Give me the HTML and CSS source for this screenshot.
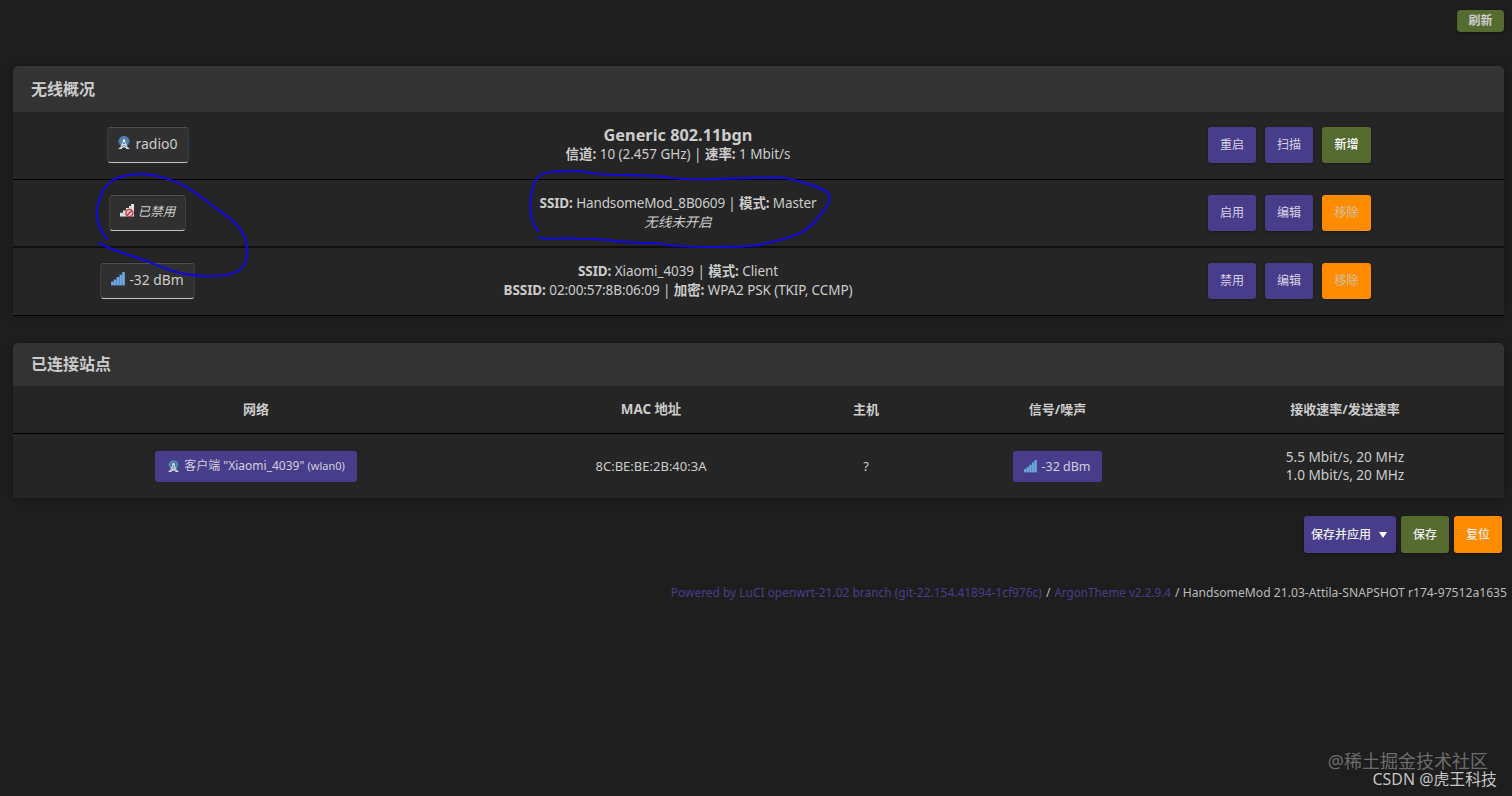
FILE: index.html
```html
<!DOCTYPE html>
<html lang="zh-CN">
<head>
<meta charset="utf-8">
<title>HandsomeMod - 无线</title>
<link rel="stylesheet" href="styles.css">
</head>
<body>
<svg class="defs" width="0" height="0" aria-hidden="true">
  <symbol id="antenna" viewBox="0 0 14 14">
    <circle cx="7" cy="5.5" r="5.8" fill="#37608c"/>
    <circle cx="7" cy="5.2" r="4.2" fill="#4879a8" stroke="#6b9aca" stroke-width=".9"/>
    <path d="M6.8 4.5 3.4 12.4M7.2 4.5l3.4 7.9M5.3 8.4h3.4M4.6 9.6l5 2.2M9.4 9.6l-5 2.2" fill="none" stroke="#dedfdd" stroke-width="1.05"/>
    <path d="M1.7 12.3h3.2M9.1 12.3h3.2" stroke="#dedfdd" stroke-width="1.2"/>
    <circle cx="7" cy="4.4" r="1.2" fill="#f4f4f4"/>
  </symbol>
  <symbol id="bars" viewBox="0 0 14 14">
    <path d="M0 13.5V9.5h2.5V7.5h3V5h3V2.5h2.5V0H14v13.5z" fill="#5288c4"/>
    <path d="M1.3 13V10M4 13V8M6.9 13V5.5M9.7 13V3M12.5 13V.6" stroke="#78aadf" stroke-width="1.7"/>
  </symbol>
  <symbol id="bars-off" viewBox="0 0 14 14">
    <path d="M0 12.5V8.8h3V6.5h3V4h3V2h2V0h3v12.5z" fill="#e4e2dc"/>
    <path d="M3 9v3M6 6.7V12M9 4v8M11.2 2v8" stroke="#aaa8a4" stroke-width=".5"/>
    <circle cx="9.4" cy="9" r="3.6" fill="#e8c4c6" stroke="#bd3c4a" stroke-width="1.4"/>
    <path d="m7 11.4 4.8-4.8" stroke="#bd3c4a" stroke-width="1.4"/>
  </symbol>
</svg>

<div class="toolbar"><button class="btn-refresh">刷新</button></div>

<section class="panel overview">
  <h3 class="title">无线概况</h3>
  <div class="device">
    <div class="cell"><span class="badge radio"><svg class="ico"><use href="#antenna"/></svg><span>radio0</span></span></div>
    <div class="cell"><strong class="name">Generic 802.11bgn</strong><span class="line l-radio"><b>信道:</b> 10 (2.457 GHz) | <b>速率:</b> 1 Mbit/s</span></div>
    <div class="cell actions"><button class="btn">重启</button><button class="btn">扫描</button><button class="btn add">新增</button></div>
  </div>
  <div class="device">
    <div class="cell"><span class="badge disabled"><svg class="ico"><use href="#bars-off"/></svg><em>已禁用</em></span></div>
    <div class="cell"><span class="line l-ap"><b>SSID:</b> HandsomeMod_8B0609 | <b>模式:</b> Master</span><em class="line note">无线未开启</em></div>
    <div class="cell actions"><button class="btn">启用</button><button class="btn">编辑</button><button class="btn remove">移除</button></div>
  </div>
  <div class="device">
    <div class="cell"><span class="badge signal"><svg class="ico"><use href="#bars"/></svg><span>-32 dBm</span></span></div>
    <div class="cell"><span class="line l-sta"><b>SSID:</b> Xiaomi_4039 | <b>模式:</b> Client</span><span class="line l-bssid"><b>BSSID:</b> 02:00:57:8B:06:09 | <b>加密:</b> WPA2 PSK (TKIP, CCMP)</span></div>
    <div class="cell actions"><button class="btn">禁用</button><button class="btn">编辑</button><button class="btn remove">移除</button></div>
  </div>
</section>

<section class="panel stations">
  <h3 class="title">已连接站点</h3>
  <div class="station head"><span>网络</span><span>MAC 地址</span><span>主机</span><span>信号/噪声</span><span>接收速率/发送速率</span></div>
  <div class="station">
    <div><span class="tag net"><svg class="ico"><use href="#antenna"/></svg><span>客户端 "Xiaomi_4039" <small>(wlan0)</small></span></span></div>
    <div><span class="mac">8C:BE:BE:2B:40:3A</span></div>
    <div>?</div>
    <div><span class="tag level"><svg class="ico"><use href="#bars"/></svg><span>-32 dBm</span></span></div>
    <div class="rates">5.5 Mbit/s, 20 MHz<br>1.0 Mbit/s, 20 MHz</div>
  </div>
</section>

<div class="page-actions"><button class="btn apply">保存并应用<i class="caret"></i></button><button class="btn save">保存</button><button class="btn reset">复位</button></div>

<footer class="footer"><a class="luci">Powered by LuCI openwrt-21.02 branch (git-22.154.41894-1cf976c)</a><span>/</span><a class="argon">ArgonTheme v2.2.9.4</a><span class="version">/ HandsomeMod 21.03-Attila-SNAPSHOT r174-97512a1635</span></footer>

<svg class="ink" viewBox="0 0 1512 796" aria-hidden="true">
  <path d="M107 239C99 229 96 220 97 211C99 195 105 184 115 179C130 173 148 173 165 178C186 184 200 196 217 209C232 219 242 229 245 238C248 248 247 259 244 265C239 273 229 276 212 276C190 277 173 272 154 264C135 256 115 252 99 243"/>
  <path d="M538 231C530 221 529 205 532 190C535 180 538 173 551 172C567 171 581 170 598 174C624 176 650 174 672 178C704 182 758 176 785 178C800 181 824 188 829 194C832 202 823 211 817 219C808 232 794 236 780 240C762 245 749 247 716 247C690 247 670 246 656 243C626 244 606 238 584 239C566 237 550 240 538 238"/>
</svg>
<div class="mark community">@稀土掘金技术社区</div>
<div class="mark author">CSDN @虎王科技</div>
</body>
</html>
```
FILE: styles.css
```css
* { box-sizing: border-box; }
body { margin: 0; height: 796px; overflow: hidden; background: #1e1e1e; color: #ccc; font: 14px/20px "Noto Sans", "Noto Sans CJK SC", sans-serif; }
button { font: inherit; border: 0; padding: 0; color: inherit; }
.defs { display: block; }
.toolbar { display: flex; justify-content: flex-end; height: 66px; padding: 10px 8px 0 0; }
.btn-refresh { width: 47px; height: 22px; border-radius: 4px; background: #556b2f; font-size: 12px; font-weight: 700; line-height: 20px; box-shadow: 0 1px 3px rgba(0,0,0,.4); }
.panel { width: 1491px; margin-left: 13px; border-radius: 5px 5px 0 0; background: #252525; box-shadow: 0 0 10px rgba(0,0,0,.3); overflow: hidden; }
.title { margin: 0; padding-left: 18px; height: 46px; line-height: 46px; font-size: 16px; background: #333; }
.device { display: grid; grid-template-columns: 269px 792px 1fr; height: 68px; padding-bottom: 1px; border-bottom: 1px solid #000; }
.device:nth-child(3) { padding-bottom: 0; border-bottom: 2px solid #101010; }
.cell { display: flex; flex-direction: column; align-items: center; justify-content: center; white-space: nowrap; }
.actions { flex-direction: row; gap: 9px; padding-left: 1px; }
.line { line-height: 19px; font-size: 13.5px; }
.l-radio { letter-spacing: -.03px; }
.l-ap { letter-spacing: -.13px; }
.l-sta { letter-spacing: -.08px; }
.l-bssid { letter-spacing: -.09px; }
.name { font-size: 16.3px; line-height: 19px; }
.badge { display: flex; justify-content: center; gap: 4px; height: 36px; padding-top: 6px; border: 1px solid #3c3c3c; border-top-color: #505050; border-bottom: 1px solid #c4c4c4; border-radius: 4px; background: #303030; }
.radio { width: 82px; }
.disabled { width: 77px; font-size: 12.5px; }
.signal { width: 95px; gap: 4px; }
.signal span { font-size: 13.8px; }
.ico { width: 14px; height: 14px; flex: none; margin-top: 2px; }
.btn { width: 48px; height: 36px; border-radius: 3px; background: #483d8b; font-size: 12px; line-height: 36px; color: #d8d4e4; box-shadow: 0 1px 3px rgba(0,0,0,.3); }
.add { width: 49px; background: #556b2f; color: #fff; font-weight: 500; }
.remove { width: 49px; background: #ff8c00; color: #d0c0a8; }
.stations { margin-top: 27px; }
.stations .title { height: 43px; line-height: 43px; }
.station { display: grid; grid-template-columns: 486px 304px 126px 257px 1fr; height: 64px; align-items: center; justify-items: center; font-size: 13px; white-space: nowrap; }
.head { height: 48px; padding-bottom: 2px; border-bottom: 1px solid #000; font-weight: 700; }
.head span:nth-child(2) { font-size: 13.4px; }
.tag { display: flex; align-items: center; justify-content: center; gap: 4px; height: 31px; border-radius: 3px; background: #483d8b; color: #d2cede; }
.tag .ico { margin: 0; width: 13px; height: 13px; }
.net { width: 202px; font-size: 12px; }
.net small { font-size: 11px; }
.level { width: 89px; font-size: 12.5px; }
.level span { padding-top: 1px; }
.rates { line-height: 17.5px; padding-bottom: 1px; font-size: 13.6px; }
.page-actions { display: flex; justify-content: flex-end; gap: 5px; margin-top: 18px; padding-right: 10px; }
.page-actions .btn { height: 37px; color: #eee; font-weight: 500; }
.page-actions .apply { display: flex; align-items: center; width: 92px; padding-left: 7px; }
.page-actions .save { background: #556b2f; }
.page-actions .reset { background: #ff8c00; }
.caret { margin-left: 8px; border: 4px solid transparent; border-top: 6px solid #fff; border-bottom: 0; }
.footer { display: flex; justify-content: flex-end; gap: 4px; margin-top: 30px; padding-right: 5px; line-height: 19px; font-size: 12.15px; color: #bbb; white-space: nowrap; }
.footer a { color: #483d8b; font-size: 11.95px; }
.footer .argon { font-size: 11.7px; }
.ink { position: absolute; left: 0; top: 0; width: 1512px; height: 796px; pointer-events: none; fill: none; stroke: #150ad4; stroke-width: 2.2; stroke-linecap: round; stroke-linejoin: round; }
.mark { position: absolute; white-space: nowrap; }
.community { right: 24px; top: 751px; font-size: 18px; line-height: 20px; color: #6c6c6c; }
.author { right: 15px; top: 771px; font-size: 15.9px; line-height: 16px; color: #c4c4c4; }
```
